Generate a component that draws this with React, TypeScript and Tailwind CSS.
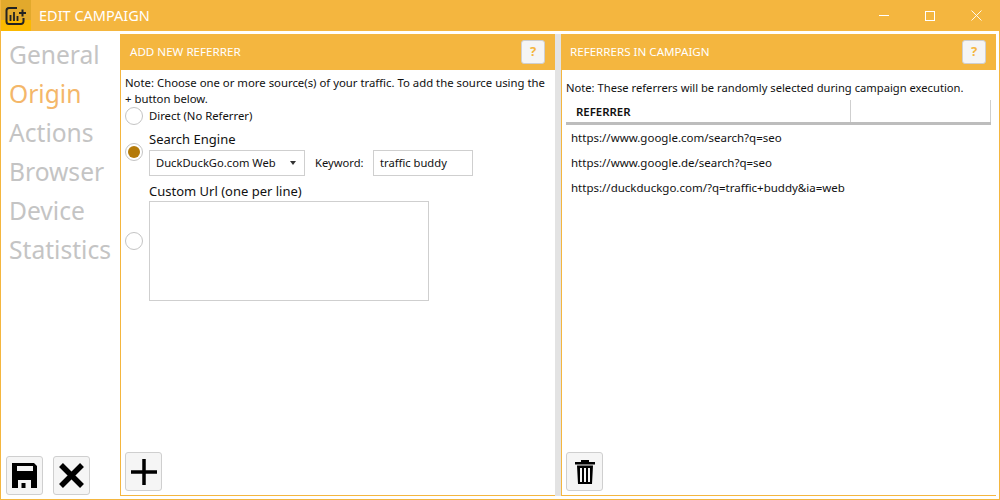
import React from "react";

const navItems = ["General", "Origin", "Actions", "Browser", "Device", "Statistics"];
const referrers = [
  "https://www.google.com/search?q=seo",
  "https://www.google.de/search?q=seo",
  "https://duckduckgo.com/?q=traffic+buddy&ia=web",
];

const IconButton = ({ children, className = "" }: { children: React.ReactNode; className?: string }) => (
  <button className={`w-[37px] h-[39px] flex items-center justify-center bg-[#f5f5f5] border border-[#cfcfcf] rounded-[3px] ${className}`}>
    {children}
  </button>
);

const PanelHeader = ({ title, padClass }: { title: string; padClass: string }) => (
  <div className={`h-[36px] shrink-0 bg-[#f4b63f] flex items-center justify-between pr-[10px] ${padClass}`}>
    <span className="text-[11.6px] text-white">{title}</span>
    <button className="w-[24px] h-[24px] -mt-[1px] bg-[#f5f5f5] border border-[#cfcfcf] rounded-[3px] text-[13px] font-bold text-[#f4b63f] leading-none">
      ?
    </button>
  </div>
);

const Radio = ({ checked = false, className = "" }: { checked?: boolean; className?: string }) => (
  <span className={`w-[18px] h-[18px] shrink-0 rounded-full border border-[#c4c4c4] bg-white flex items-center justify-center ${className}`}>
    {checked && <span className="w-[12px] h-[12px] rounded-full bg-[#b47a0a]" />}
  </span>
);

export default function App() {
  return (
    <div className="w-[1000px] h-[500px] overflow-hidden bg-white border border-[#f4b63f] border-t-0 flex flex-col font-['Noto_Sans','Open_Sans',sans-serif] text-[#111]">
      {/* title bar */}
      <div className="h-[31px] shrink-0 bg-[#f4b63f] flex items-center -ml-px -mr-px">
        <div className="w-[31px] h-[31px] bg-[linear-gradient(#e2a92c_65%,#fbb900_65%)]">
          <svg width="31" height="31" viewBox="0 0 31 31" fill="none" stroke="#222" strokeWidth="2">
            <path d="M17 8H9A2.500 2.500 0 0 0 6.500 10.500V21.500A2.500 2.500 0 0 0 9 24H21A2.500 2.500 0 0 0 23.500 21.500V18" />
            <path d="M10.500 15V21M14 12V21M17.500 16V21" strokeWidth="1.800" />
            <path d="M22.500 9.500V16.500M19 13H26" />
          </svg>
        </div>
        <span className="ml-[8px] text-[14.500px] text-white">EDIT CAMPAIGN</span>
        <div className="ml-auto mr-[1px] flex items-center h-full">
          <div className="w-[46px] flex justify-center"><span className="w-[10px] h-px bg-white" /></div>
          <div className="w-[46px] flex justify-center"><span className="w-[10px] h-[10px] border border-white" /></div>
          <div className="w-[46px] flex justify-center">
            <svg width="11" height="11" viewBox="0 0 11 11" stroke="white" strokeWidth="0.9"><path d="M0.500 0.500L10.500 10.500M10.500 0.500L0.500 10.500" /></svg>
          </div>
        </div>
      </div>

      <div className="flex-1 min-h-0 flex pt-[3px] pr-[2px] pb-[3px]">
        {/* sidebar */}
        <div className="w-[119px] shrink-0 flex flex-col justify-between pb-[1px]">
          <div className="flex flex-col pl-[8px] pt-[1px]">
            {navItems.map((item) => (
              <div key={item} className={`h-[39px] text-[24.600px] leading-[39px] ${item === "Origin" ? "text-[#f4b76a]" : "text-[#c4c4c4]"}`}>
                {item}
              </div>
            ))}
          </div>
          <div className="flex gap-[10px] pl-[5px]">
            <IconButton>
              <svg width="25" height="25" viewBox="0 0 25 25">
                <path fillRule="evenodd" d="M0 0H22L25 3V25H0ZM5 3V8H21V3ZM6 17V25H19V17Z" />
                <rect x="9.500" y="20" width="4" height="5" />
              </svg>
            </IconButton>
            <IconButton>
              <svg width="27" height="27" viewBox="0 0 27 27" stroke="#000" strokeWidth="5.500"><path d="M3 3L24 24M24 3L3 24" /></svg>
            </IconButton>
          </div>
        </div>

        {/* add panel */}
        <div className="w-[435px] shrink-0 border-l border-b border-[#f4b63f] flex flex-col">
          <PanelHeader title="ADD NEW REFERRER" padClass="pl-[9px]" />
          <div className="flex-1 min-h-0 flex flex-col pl-[4px] pr-[6px] pt-[5px] pb-[4px]">
            <p className="text-[11.350px] leading-[16px]">
              Note: Choose one or more source(s) of your traffic. To add the source using the + button below.
            </p>
            <div className="flex items-center gap-[6px] h-[18px] text-[11.300px]">
              <Radio />
              <span>Direct (No Referrer)</span>
            </div>
            <div className="flex items-center gap-[6px] mt-[5px]">
              <Radio checked className="-mt-[2px]" />
              <div className="flex flex-col">
                <span className="text-[13px] leading-[18px]">Search Engine</span>
                <div className="flex items-center text-[11.200px] mt-[2px]">
                  <div className="w-[156px] h-[26px] border border-[#cfcfcf] flex items-center justify-between pl-[6px] pr-[8px]">
                    <span>DuckDuckGo.com Web</span>
                    <span className="w-0 h-0 border-x-[3.500px] border-x-transparent border-t-[4px] border-t-[#333]" />
                  </div>
                  <span className="ml-[10px] w-[48px] whitespace-nowrap">Keyword:</span>
                  <div className="ml-[10px] w-[100px] h-[26px] border border-[#cfcfcf] flex items-center pl-[6px]">traffic buddy</div>
                </div>
              </div>
            </div>
            <div className="flex items-center gap-[6px] mt-[6px]">
              <Radio className="-mt-[1px]" />
              <div className="flex flex-col">
                <span className="text-[13px] leading-[18px]">Custom Url (one per line)</span>
                <div className="w-[280px] h-[100px] border border-[#cfcfcf] mt-[1px]" />
              </div>
            </div>
            <IconButton className="mt-auto">
              <svg width="28" height="28" viewBox="0 0 28 28" stroke="#000" strokeWidth="3.500"><path d="M14 1V27M1 14H27" /></svg>
            </IconButton>
          </div>
        </div>

        {/* splitter */}
        <div className="w-[6px] shrink-0 bg-[#e3e3e3]" />

        {/* referrers panel */}
        <div className="flex-1 min-w-0 mr-[1px] border-l border-b border-[#f4b63f] flex flex-col">
          <PanelHeader title="REFERRERS IN CAMPAIGN" padClass="pl-[8px]" />
          <div className="flex-1 min-h-0 flex flex-col pl-[4px] pr-[5px] pt-[10px] pb-[4px]">
            <p className="text-[11.200px] leading-[16px] whitespace-nowrap">
              Note: These referrers will be randomly selected during campaign execution.
            </p>
            <div className="h-[25px] shrink-0 mt-[4px] border-b-[3px] border-[#bdbdbd] flex text-[11.400px] font-semibold">
              <div className="w-[285px] border-r border-[#cfcfcf] pl-[10px] leading-[24px]">REFERRER</div>
              <div className="flex-1 border-r border-[#cfcfcf]" />
            </div>
            <div className="flex flex-col text-[11.500px]">
              {referrers.map((r) => (
                <div key={r} className="h-[25px] leading-[25px] pl-[5px]">{r}</div>
              ))}
            </div>
            <IconButton className="mt-auto">
              <svg width="20" height="24" viewBox="0 0 20 24">
                <path fillRule="evenodd" d="M6 0H14V2H20V4.500H0V2H6ZM2 5.500H18L17 24H3ZM5 8V22H7V8ZM9 8V22H11V8ZM13 8V22H15V8Z" />
              </svg>
            </IconButton>
          </div>
        </div>
      </div>
    </div>
  );
}
